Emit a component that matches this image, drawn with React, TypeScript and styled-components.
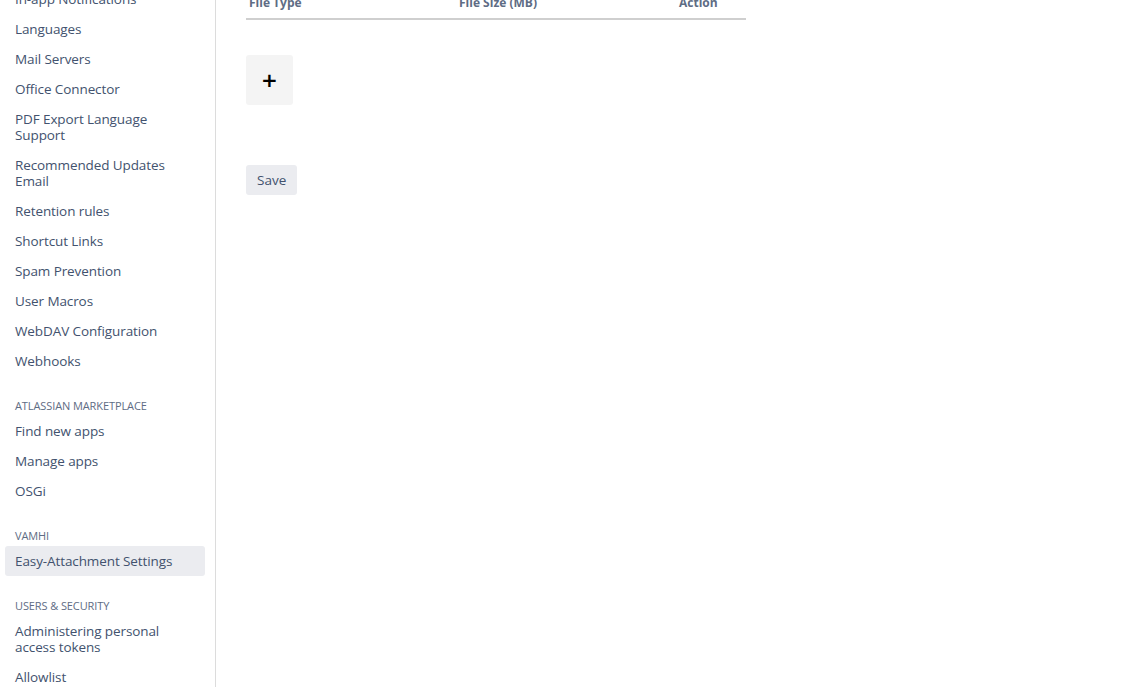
import React from 'react';
import styled, { createGlobalStyle } from 'styled-components';

const GlobalStyle = createGlobalStyle`
  html, body {
    margin: 0;
    padding: 0;
    background: #fff;
    overflow: hidden;
  }
  body {
    font-family: "Open Sans", "Noto Sans", "Liberation Sans", sans-serif;
    font-size: 14px;
    color: #172b4d;
  }
`;

type NavEntry = { label: string; active?: boolean };
type NavSection = { heading?: string; items: NavEntry[] };

const sections: NavSection[] = [
  {
    items: [
      { label: 'In-app Notifications' },
      { label: 'Languages' },
      { label: 'Mail Servers' },
      { label: 'Office Connector' },
      { label: 'PDF Export Language Support' },
      { label: 'Recommended Updates Email' },
      { label: 'Retention rules' },
      { label: 'Shortcut Links' },
      { label: 'Spam Prevention' },
      { label: 'User Macros' },
      { label: 'WebDAV Configuration' },
      { label: 'Webhooks' },
    ],
  },
  {
    heading: 'Atlassian Marketplace',
    items: [{ label: 'Find new apps' }, { label: 'Manage apps' }, { label: 'OSGi' }],
  },
  {
    heading: 'VAMHI',
    items: [{ label: 'Easy-Attachment Settings', active: true }],
  },
  {
    heading: 'Users & Security',
    items: [{ label: 'Administering personal access tokens' }, { label: 'Allowlist' }],
  },
];

const Page = styled.div`
  display: flex;
  height: 687px;
  overflow: hidden;
`;

const Sidebar = styled.nav`
  width: 216px;
  flex-shrink: 0;
  border-right: 1px solid #dcdcdc;
  box-sizing: border-box;
  overflow: hidden;
`;

const SidebarInner = styled.div`
  margin-top: -16px;
  padding: 0 10px 0 5px;
`;

const Heading = styled.div`
  margin: 22px 0 2px 10px;
  font-size: 11px;
  line-height: 16px;
  text-transform: uppercase;
  color: #5e6c84;
  font-weight: 500;
  letter-spacing: -0.1px;
`;

const NavItem = styled.a<{ $active?: boolean }>`
  display: block;
  padding: 7px 10px;
  line-height: 16px;
  font-size: 13.5px;
  color: #42526e;
  text-decoration: none;
  border-radius: 3px;
  background: ${(p) => (p.$active ? '#ebecf0' : 'transparent')};
  cursor: pointer;
  letter-spacing: -0.1px;
`;

const Main = styled.main`
  flex: 1;
  padding: 0 30px;
`;

const Table = styled.table`
  width: 500px;
  table-layout: fixed;
  border-collapse: collapse;
  margin-top: -11px;
`;

const Th = styled.th<{ $width: number }>`
  box-sizing: border-box;
  width: ${(p) => p.$width}px;
  text-align: left;
  padding: 5px 3px 6px;
  font-size: 12px;
  line-height: 18px;
  font-weight: 700;
  color: #5e6c84;
  border-bottom: 2px solid #cfcfcf;
`;

const Controls = styled.div`
  display: flex;
  flex-direction: column;
  align-items: flex-start;
  padding-top: 35px;
  gap: 60px;
`;

const AddButton = styled.button`
  width: 47px;
  height: 50px;
  border: none;
  border-radius: 3px;
  background: #f4f4f4;
  color: #000;
  font-family: "DejaVu Sans", sans-serif;
  font-size: 20px;
  font-weight: 700;
  line-height: 1;
  cursor: pointer;
  padding: 0;
`;

const SaveButton = styled.button`
  height: 30px;
  padding: 0 11px;
  border: none;
  border-radius: 3px;
  background: #ebecf0;
  color: #42526e;
  font-family: inherit;
  font-size: 13.5px;
  cursor: pointer;
`;

export default function App() {
  return (
    <>
      <GlobalStyle />
      <Page>
        <Sidebar>
          <SidebarInner>
            {sections.map((s, i) => (
              <div key={i}>
                {s.heading && <Heading>{s.heading}</Heading>}
                {s.items.map((it) => (
                  <NavItem key={it.label} $active={it.active}>
                    {it.label}
                  </NavItem>
                ))}
              </div>
            ))}
          </SidebarInner>
        </Sidebar>
        <Main>
          <Table>
            <thead>
              <tr>
                <Th $width={210}>File Type</Th>
                <Th $width={220}>File Size (MB)</Th>
                <Th $width={70}>Action</Th>
              </tr>
            </thead>
          </Table>
          <Controls>
            <AddButton>+</AddButton>
            <SaveButton>Save</SaveButton>
          </Controls>
        </Main>
      </Page>
    </>
  );
}
